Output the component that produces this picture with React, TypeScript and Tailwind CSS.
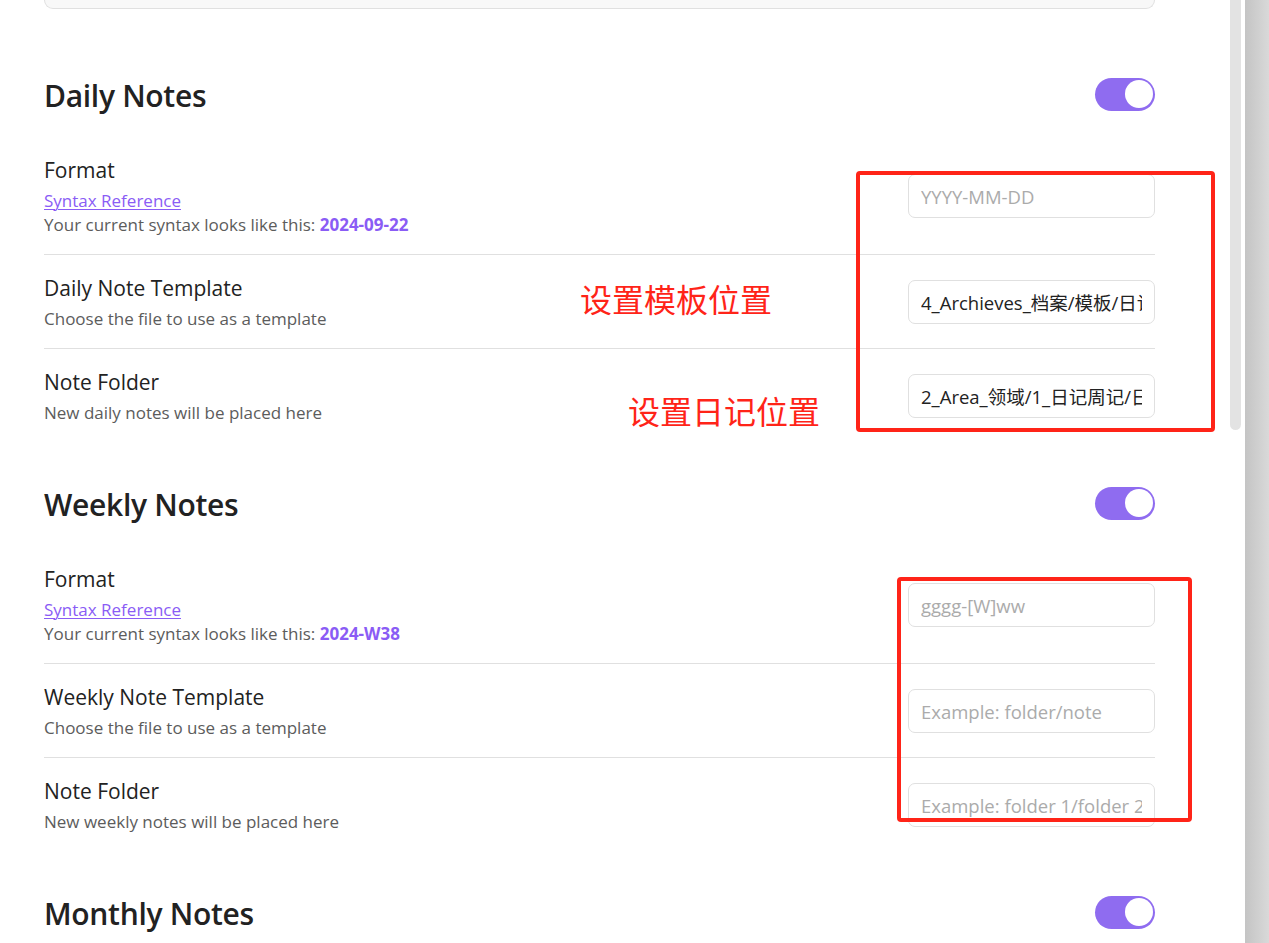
import React from "react";

const FONT = { fontFamily: '"Open Sans", "Noto Sans CJK SC", sans-serif' } as const;

function Toggle() {
  return (
    <div className="w-[60px] h-[33px] rounded-full bg-[#8f6cf0] flex items-center justify-end p-[2px] shrink-0">
      <div className="w-[28px] h-[28px] rounded-full bg-white" />
    </div>
  );
}

function Heading({ title }: { title: string }) {
  return (
    <div className="flex items-center justify-between h-[40px]">
      <div className="text-[30px] font-semibold leading-[40px] text-[#222222] tracking-[-0.3px]">{title}</div>
      <div className="-mt-[4px]">
        <Toggle />
      </div>
    </div>
  );
}

function Input({ value, placeholder }: { value?: string; placeholder?: string }) {
  return (
    <input
      readOnly
      value={value ?? ""}
      placeholder={placeholder}
      className="w-[247px] h-[44px] shrink-0 rounded-[7px] border border-[#e0e0e0] bg-white px-[12px] text-[18.5px] text-[#222222] placeholder:text-[#ababab] outline-none"
      style={FONT}
    />
  );
}

function Row({
  title,
  children,
  input,
  first,
}: {
  title: string;
  children: React.ReactNode;
  input: React.ReactNode;
  first?: boolean;
}) {
  return (
    <div className={`flex items-center justify-between pt-[18px] pb-[17px] ${first ? "" : "border-t border-[#e0e0e0]"}`}>
      <div className="flex flex-col">
        <div className="text-[21px] leading-[30px] text-[#222222]">{title}</div>
        <div className="mt-[4px] text-[17px] leading-[24px] text-[#5c5c5c]">{children}</div>
      </div>
      {input}
    </div>
  );
}

function FormatRow({ value, placeholder }: { value: string; placeholder: string }) {
  return (
    <Row title="Format" first input={<Input placeholder={placeholder} />}>
      <div>
        <a className="text-[#8a5cf5] underline underline-offset-[2px] decoration-[1px]">Syntax Reference</a>
      </div>
      <div>
        Your current syntax looks like this: <span className="font-bold text-[#8a5cf5]">{value}</span>
      </div>
    </Row>
  );
}

export default function App() {
  return (
    <div className="relative w-[1269px] h-[943px] overflow-hidden bg-white flex" style={FONT}>
      <div className="w-[1230px] shrink-0 pl-[44px] pr-[75px]">
        <div className="h-[9px] border border-t-0 border-[#e0e0e0] bg-[#f8f8f8] rounded-b-[12px]" />

        <div className="pt-[67px]">
          <Heading title="Daily Notes" />
          <div className="mt-[21px]">
            <FormatRow value="2024-09-22" placeholder="YYYY-MM-DD" />
            <Row title="Daily Note Template" input={<Input value="4_Archieves_档案/模板/日记模板" />}>
              Choose the file to use as a template
            </Row>
            <Row title="Note Folder" input={<Input value="2_Area_领域/1_日记周记/日记" />}>
              New daily notes will be placed here
            </Row>
          </div>
        </div>

        <div className="pt-[43px]">
          <Heading title="Weekly Notes" />
          <div className="mt-[21px]">
            <FormatRow value="2024-W38" placeholder="gggg-[W]ww" />
            <Row title="Weekly Note Template" input={<Input placeholder="Example: folder/note" />}>
              Choose the file to use as a template
            </Row>
            <Row title="Note Folder" input={<Input placeholder="Example: folder 1/folder 2" />}>
              New weekly notes will be placed here
            </Row>
          </div>
        </div>

        <div className="pt-[43px]">
          <Heading title="Monthly Notes" />
        </div>
      </div>

      <div className="w-[11px] shrink-0">
        <div className="h-[430px] bg-[#e3e3e3] rounded-b-full" />
      </div>
      <div className="w-[4px] shrink-0" />
      <div className="flex-1 bg-gradient-to-r from-[#c4c4c4] to-[#d9d9d9]" />

      {/* annotations */}
      <div className="absolute left-[856px] top-[171px] w-[359px] h-[261px] border-[4px] border-[#ff2418] rounded-[4px]" />
      <div className="absolute left-[897px] top-[577px] w-[295px] h-[245px] border-[4px] border-[#ff2418] rounded-[4px]" />
      <div
        className="absolute left-[580px] top-[278px] text-[32px] leading-[40px] text-[#ff2418]"
        style={{ fontFamily: '"Noto Sans CJK SC", sans-serif' }}
      >
        设置模板位置
      </div>
      <div
        className="absolute left-[628px] top-[390px] text-[32px] leading-[40px] text-[#ff2418]"
        style={{ fontFamily: '"Noto Sans CJK SC", sans-serif' }}
      >
        设置日记位置
      </div>
    </div>
  );
}
